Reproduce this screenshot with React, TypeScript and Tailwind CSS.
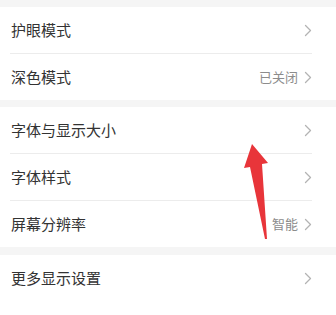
import React from "react";

function Chevron() {
  return (
    <svg width="8" height="13" viewBox="0 0 8 13" className="shrink-0">
      <path d="M1.5 1.5 L6.5 6.5 L1.5 11.5" fill="none" stroke="#b3b3b3" strokeWidth="1.3" strokeLinecap="round" strokeLinejoin="round" />
    </svg>
  );
}

function Row({ label, value }: { label: string; value?: string }) {
  return (
    <div className="flex h-[46px] items-center justify-between pl-[11px] pr-[24px]">
      <span className="text-[15px] text-[#333333]">{label}</span>
      <div className="flex items-center gap-[6px]">
        {value && <span className="text-[13px] text-[#8c8c8c]">{value}</span>}
        <Chevron />
      </div>
    </div>
  );
}

function Divider() {
  return <div className="ml-[10px] mr-[24px] h-px bg-[#ececec]" />;
}

export default function App() {
  return (
    <div
      className="relative h-[315px] w-[336px] overflow-hidden bg-[#f5f5f5]"
      style={{ fontFamily: '"Noto Sans CJK SC", "Noto Sans", sans-serif' }}
    >
      <div className="h-[7px]" />
      <div className="bg-white">
        <Row label="护眼模式" />
        <Divider />
        <Row label="深色模式" value="已关闭" />
      </div>
      <div className="h-[7px]" />
      <div className="bg-white">
        <Row label="字体与显示大小" />
        <Divider />
        <Row label="字体样式" />
        <Divider />
        <Row label="屏幕分辨率" value="智能" />
      </div>
      <div className="h-[8px]" />
      <div className="h-[60px] bg-white">
        <Row label="更多显示设置" />
      </div>
      <svg className="absolute left-0 top-0" width="336" height="315" viewBox="0 0 336 315">
        <polygon
          points="252,144 244,168 250,167 265,239 267,239 262,164 268,163"
          fill="#e8353a"
        />
      </svg>
    </div>
  );
}
